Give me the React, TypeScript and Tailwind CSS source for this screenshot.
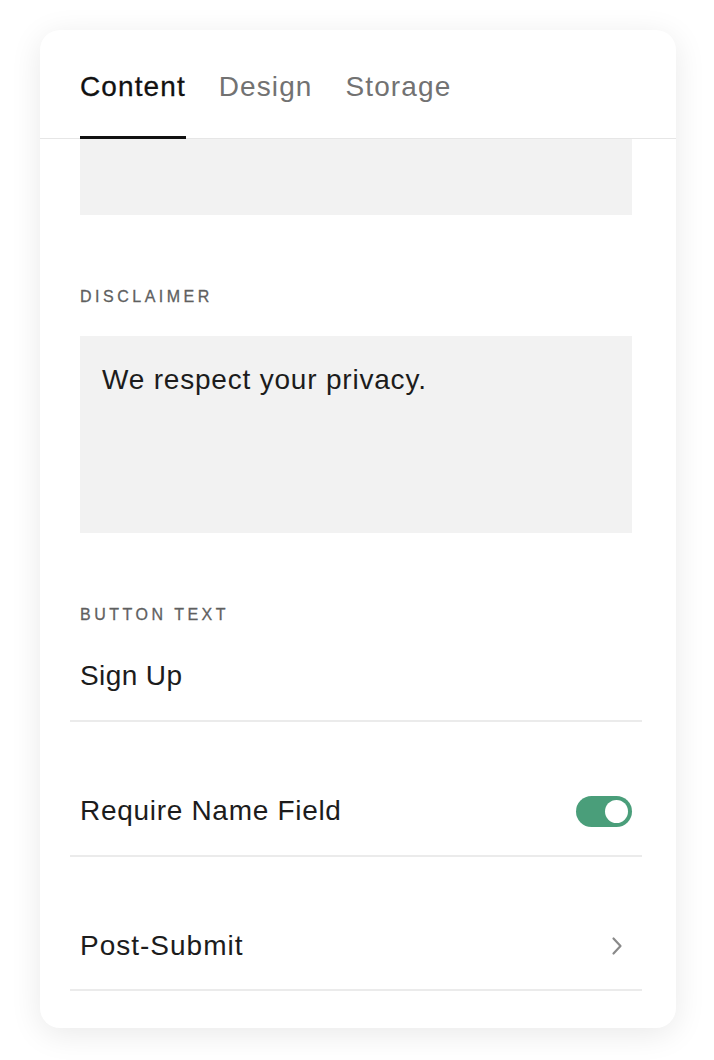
import React from "react";

function Toggle() {
  return (
    <div className="relative h-[31px] w-[56px] rounded-full bg-[#4a9e7a]">
      <div className="absolute right-[4px] top-[4px] h-[23px] w-[23px] rounded-full bg-white" />
    </div>
  );
}

function Chevron() {
  return (
    <svg width="16" height="22" viewBox="0 0 16 22" fill="none">
      <path d="M4.5 3.5 L11.5 11 L4.5 18.5" stroke="#8a8a8a" strokeWidth="2.2" strokeLinecap="round" strokeLinejoin="round" />
    </svg>
  );
}

export default function App() {
  return (
    <div
      className="min-h-[1060px] w-[714px] bg-white pt-[30px] pl-[40px]"
      style={{ fontFamily: "'Liberation Sans', Arial, Helvetica, sans-serif" }}
    >
      <div className="h-[998px] w-[636px] overflow-hidden rounded-[20px] bg-white shadow-[0_6px_32px_rgba(0,0,0,0.09)]">
        <div className="flex h-[109px] gap-[33px] border-b border-[#e6e6e6] px-[40px]">
          <div className="relative flex items-center pt-[5px] text-[28px] text-[#111] tracking-[1.1px] [-webkit-text-stroke:0.3px_#111]">
            Content
            <div className="absolute bottom-[-1px] left-0 right-0 h-[3px] bg-[#111]" />
          </div>
          <div className="flex items-center pt-[5px] text-[28px] text-[#727272] tracking-[1.1px]">Design</div>
          <div className="flex items-center pt-[5px] text-[28px] text-[#727272] tracking-[1.1px]">Storage</div>
        </div>

        <div className="pl-[40px] pr-[44px]">
          <div className="h-[76px] bg-[#f2f2f2]" />

          <div className="mt-[72px] text-[16px] leading-[20px] tracking-[3.5px] text-[#5f5f5f] [-webkit-text-stroke:0.3px_#5f5f5f]">
            DISCLAIMER
          </div>

          <div className="mt-[29px] h-[197px] bg-[#f2f2f2] px-[22px] pt-[28px] text-[28px] leading-[32px] tracking-[0.8px] text-[#1c1c1c]">
            We respect your privacy.
          </div>

          <div className="mt-[72px] text-[16px] leading-[20px] tracking-[3.5px] text-[#5f5f5f] [-webkit-text-stroke:0.3px_#5f5f5f]">
            BUTTON TEXT
          </div>

          <div className="mt-[35px] text-[28px] leading-[32px] tracking-[0.4px] text-[#1c1c1c]">Sign Up</div>

          <div className="-mx-[10px] mt-[28px] border-t-2 border-[#ebebeb]" />

          <div className="-mx-[10px] mt-[45px] flex h-[90px] items-center justify-between border-b-2 border-[#ebebeb] px-[10px]">
            <span className="text-[28px] tracking-[0.7px] text-[#1c1c1c]">Require Name Field</span>
            <Toggle />
          </div>

          <div className="-mx-[10px] mt-[45px] flex h-[89px] items-center justify-between border-b-2 border-[#ebebeb] pl-[10px] pr-[17px]">
            <span className="text-[28px] tracking-[1px] text-[#1c1c1c]">Post-Submit</span>
            <Chevron />
          </div>
        </div>
      </div>
    </div>
  );
}
